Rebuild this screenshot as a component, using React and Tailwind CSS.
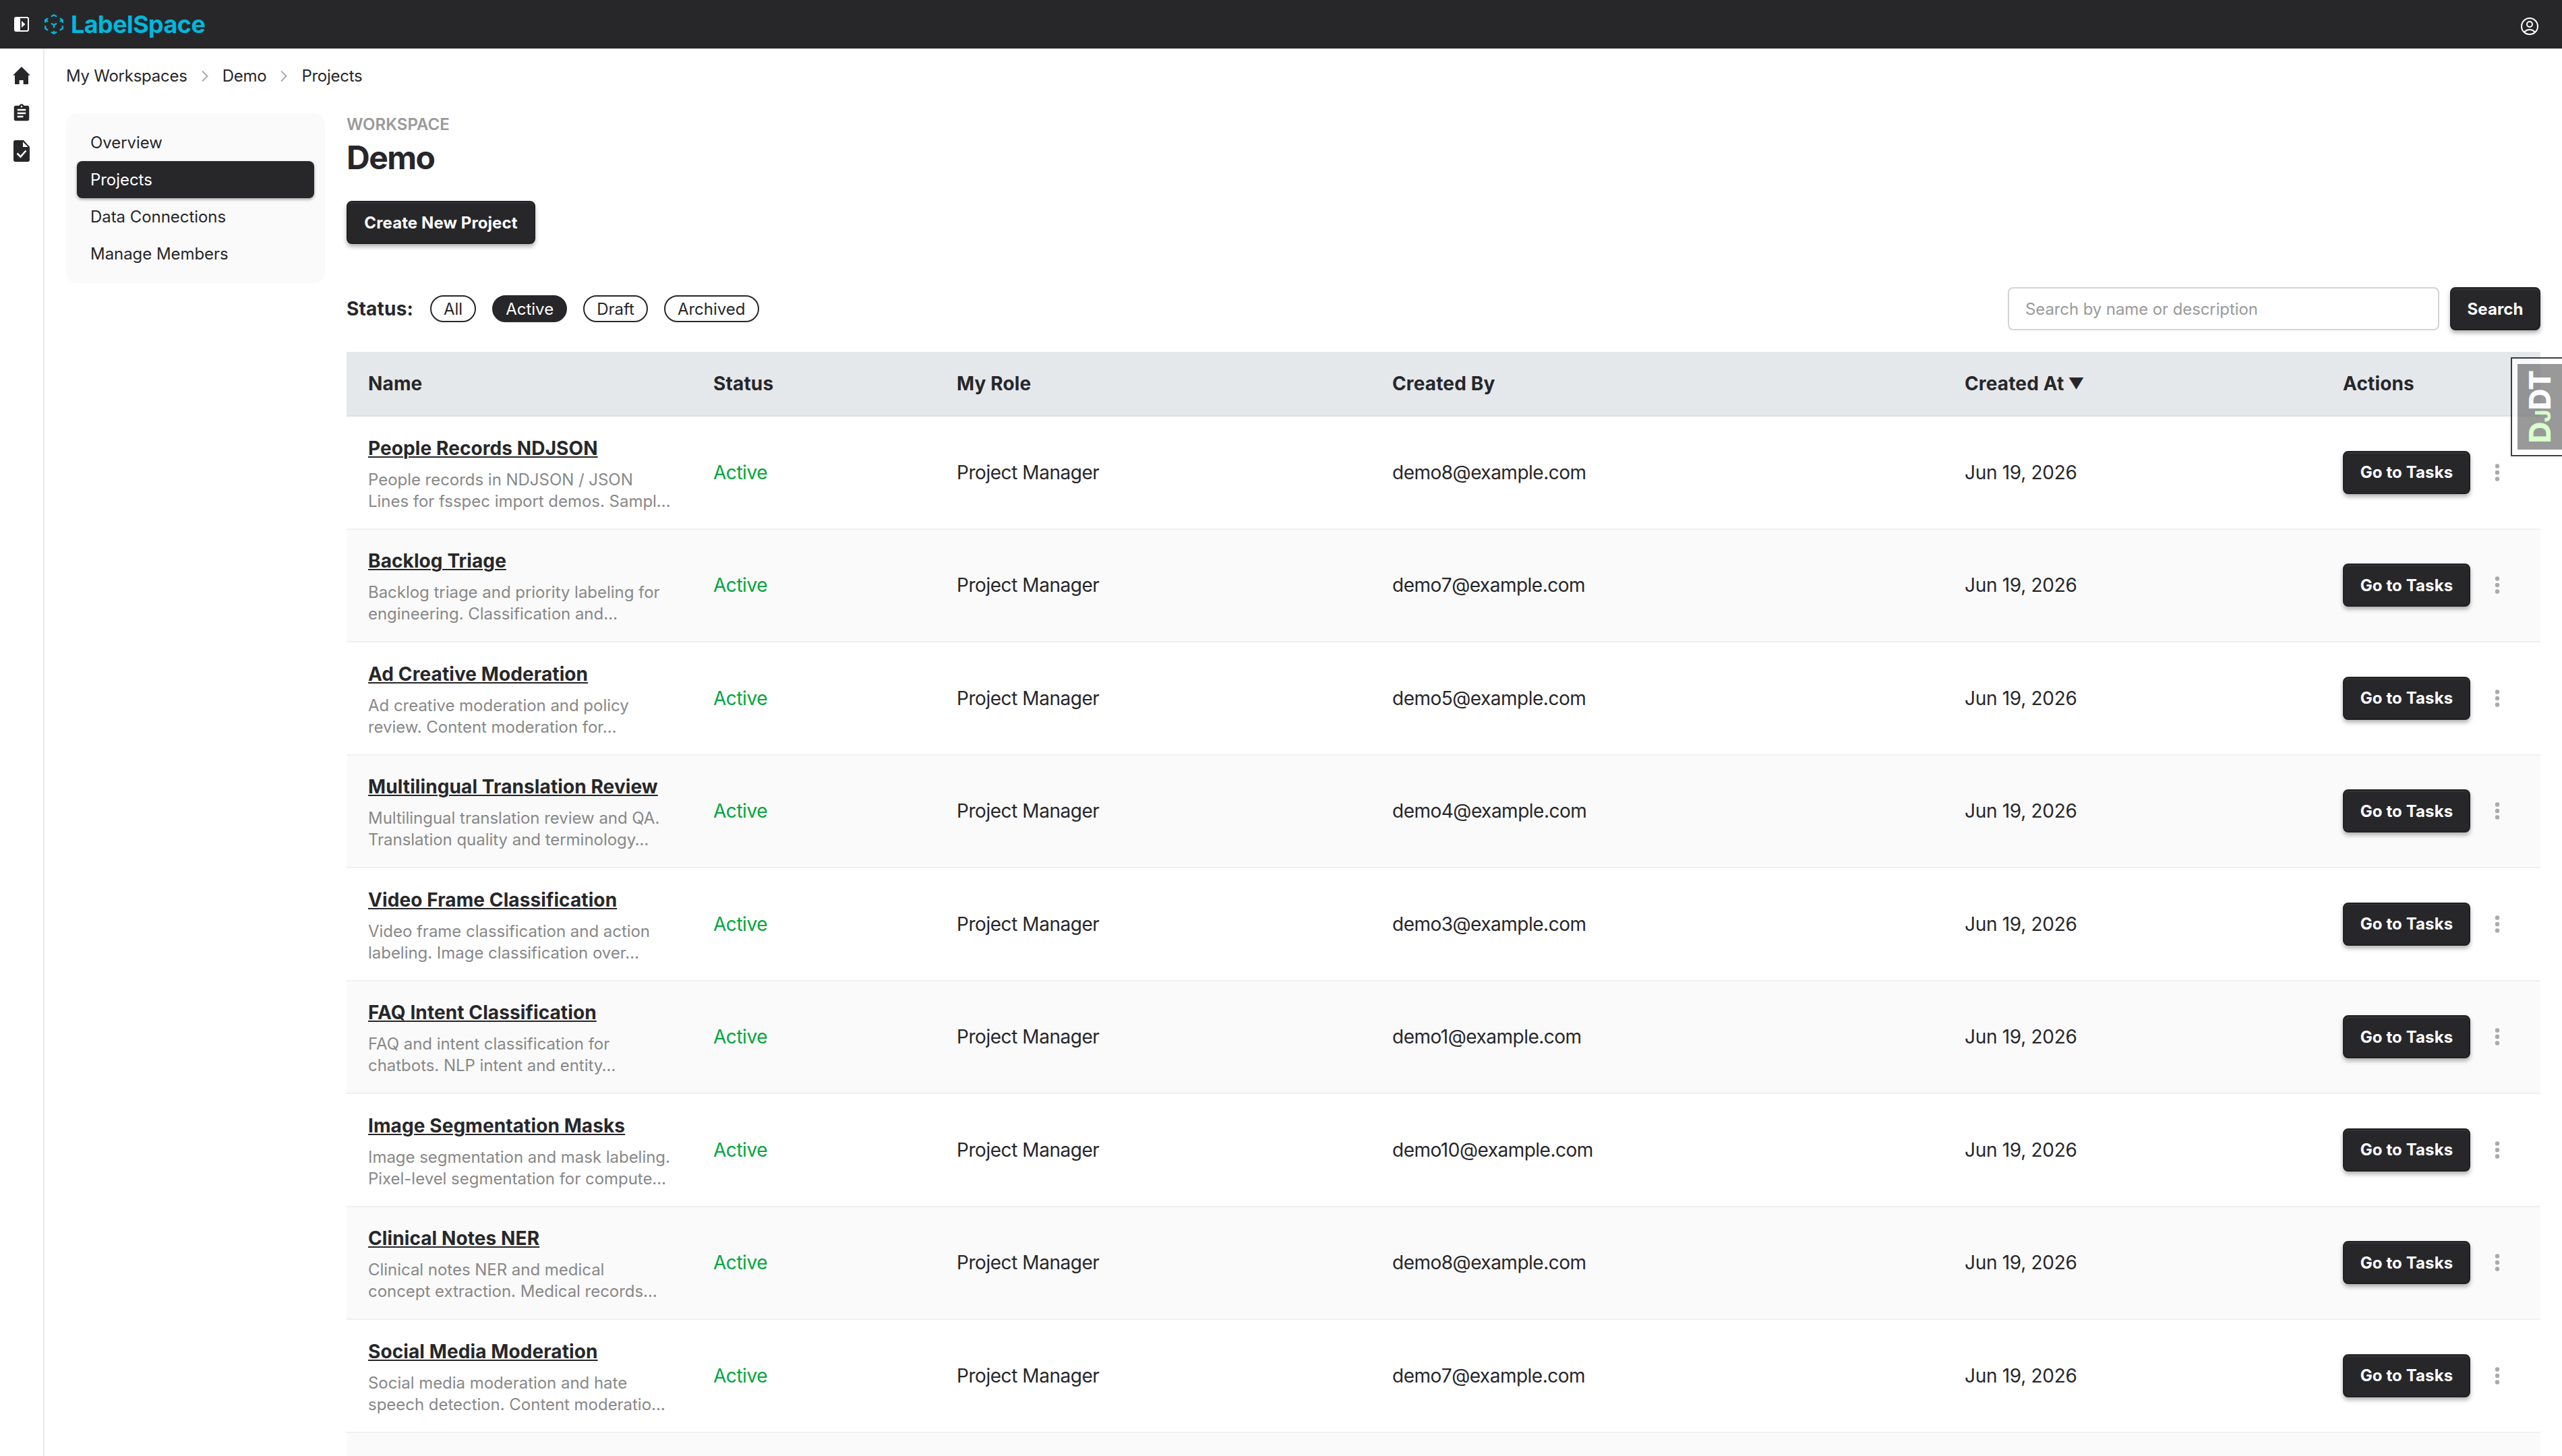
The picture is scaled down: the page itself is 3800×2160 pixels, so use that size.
import React, { useState } from 'react';

const NAV_ITEMS = ['Overview', 'Projects', 'Data Connections', 'Manage Members'];
const STATUSES = ['All', 'Active', 'Draft', 'Archived'];

const PROJECTS = [
  { name: 'People Records NDJSON', lines: ['People records in NDJSON / JSON', 'Lines for fsspec import demos. Sampl…'], createdBy: 'demo8@example.com' },
  { name: 'Backlog Triage', lines: ['Backlog triage and priority labeling for', 'engineering. Classification and…'], createdBy: 'demo7@example.com' },
  { name: 'Ad Creative Moderation', lines: ['Ad creative moderation and policy', 'review. Content moderation for…'], createdBy: 'demo5@example.com' },
  { name: 'Multilingual Translation Review', lines: ['Multilingual translation review and QA.', 'Translation quality and terminology…'], createdBy: 'demo4@example.com' },
  { name: 'Video Frame Classification', lines: ['Video frame classification and action', 'labeling. Image classification over…'], createdBy: 'demo3@example.com' },
  { name: 'FAQ Intent Classification', lines: ['FAQ and intent classification for', 'chatbots. NLP intent and entity…'], createdBy: 'demo1@example.com' },
  { name: 'Image Segmentation Masks', lines: ['Image segmentation and mask labeling.', 'Pixel-level segmentation for compute…'], createdBy: 'demo10@example.com' },
  { name: 'Clinical Notes NER', lines: ['Clinical notes NER and medical', 'concept extraction. Medical records…'], createdBy: 'demo8@example.com' },
  { name: 'Social Media Moderation', lines: ['Social media moderation and hate', 'speech detection. Content moderatio…'], createdBy: 'demo7@example.com' },
];

const GRID = 'grid grid-cols-[512px_361px_646px_849px_561px_325px] items-center';

const Button = ({ children, className = '' }) => (
  <button
    className={`h-16 pt-px rounded-[8px] bg-[#27272a] text-white text-[24px] leading-8 tracking-[0.1px] font-bold whitespace-nowrap border-2 border-[#202023] shadow-[0_4px_6px_rgba(0,0,0,0.3),inset_0_2px_0_rgba(255,255,255,0.06)] ${className}`}
  >
    {children}
  </button>
);

const Header = () => (
  <header className="h-[72px] bg-[#27272a] flex items-center justify-between pl-[18px] pr-8">
    <div className="flex items-center">
      <svg className="w-7 h-7" viewBox="0 0 28 28" fill="none">
        <rect x="4" y="4" width="20" height="20" rx="2" stroke="white" strokeWidth="2" />
        <rect x="4" y="4" width="8" height="20" fill="white" />
        <path d="M14 9l5.500 5-5.500 5z" fill="white" />
      </svg>
      <svg
        className="w-[34px] h-[34px] ml-[17px] text-[#00b8db]"
        viewBox="0 0 24 24"
        fill="none"
        stroke="currentColor"
        strokeWidth="1.700"
        strokeLinecap="round"
        strokeLinejoin="round"
      >
        <path d="m21 7.500-2.250-1.313M21 7.500v2.250m0-2.250-2.250 1.313M3 7.500l2.250-1.313M3 7.500l2.250 1.313M3 7.500v2.250m9 3 2.250-1.313M12 12.750l-2.250-1.313M12 12.750V15m0 6.750 2.250-1.313M12 21.750V19.500m0 2.250-2.250-1.313m0-16.875L12 2.250l2.250 1.313M21 14.250v2.250l-2.250 1.313m-13.500 0L3 16.500v-2.250" />
      </svg>
      <span className="ml-[8px] text-[36px] leading-10 font-bold tracking-[-0.6px] text-[#00b8db]">LabelSpace</span>
    </div>
    <svg className="w-8 h-8 mt-[6px]" viewBox="0 0 24 24" fill="none" stroke="white" strokeWidth="1.500">
      <path d="M17.982 18.725A7.488 7.488 0 0 0 12 15.750a7.488 7.488 0 0 0-5.982 2.975m11.963 0a9 9 0 1 0-11.963 0m11.963 0A8.966 8.966 0 0 1 12 21a8.966 8.966 0 0 1-5.982-2.275M15 9.750a3 3 0 1 1-6 0 3 3 0 0 1 6 0Z" />
    </svg>
  </header>
);

const Sidebar = () => (
  <aside className="w-[66px] shrink-0 border-r-2 border-[#e9e9e9] flex flex-col items-center pt-[24px] gap-[24px] text-[#27272a]">
    <svg className="w-8 h-8" viewBox="0 0 24 24" fill="currentColor">
      <path d="M12 2.200L2.400 11.900h2.100v9.200c0 .400.200.600.600.600h4.400v-4.500H14v4.500h4.900c.400 0 .600-.200.600-.600v-9.200h2.100z" />
    </svg>
    <svg className="w-[30px] h-8" viewBox="0 0 24 24" fill="currentColor">
      <path d="M19 3h-4.180C14.400 1.840 13.300 1 12 1s-2.400.840-2.820 2H5c-1.100 0-2 .900-2 2v14c0 1.100.900 2 2 2h14c1.100 0 2-.900 2-2V5c0-1.100-.900-2-2-2zm-7 0c.550 0 1 .450 1 1s-.450 1-1 1-1-.450-1-1 .450-1 1-1zm2 14H7v-2h7v2zm3-4H7v-2h10v2zm0-4H7V7h10v2z" />
    </svg>
    <svg className="w-8 h-8" viewBox="0 0 32 32">
      <path d="M7 0h12l9 10v19a3 3 0 0 1-3 3H7a3 3 0 0 1-3-3V3a3 3 0 0 1 3-3z" fill="currentColor" />
      <path d="M18 2.500v7.500h7.500z" fill="white" />
      <path d="M9.500 19.500l5 5 8-9" fill="none" stroke="white" strokeWidth="2.600" />
    </svg>
  </aside>
);

const Chevron = () => (
  <svg className="w-[10px] h-4 mx-[21px]" viewBox="0 0 10 16" fill="none" stroke="#aaa" strokeWidth="2">
    <path d="M1 0.500l7.500 7.500L1 15.500" />
  </svg>
);

const ProjectRow = ({ project, odd }) => (
  <div className={`${GRID} h-[167.500px] border-b-2 border-[#f0f0f0] tracking-[-0.45px] ${odd ? 'bg-[#fafafa]' : 'bg-white'}`}>
    <div className="pl-8 h-[112px]">
      <a className="block text-[28px] leading-10 font-bold tracking-[0.1px] underline underline-offset-[2px] decoration-2">{project.name}</a>
      <p className="mt-[11px] text-[24px] leading-8 tracking-[-0.03px] text-[#888] whitespace-nowrap">
        {project.lines[0]}
        <br />
        {project.lines[1]}
      </p>
    </div>
    <div className="pl-8 text-[#00a63e]">Active</div>
    <div className="pl-8">Project Manager</div>
    <div className="pl-8 tracking-[-0.5px]">{project.createdBy}</div>
    <div className="pl-8 tracking-[-0.3px]">Jun 19, 2026</div>
    <div className="pl-8 flex items-center">
      <Button className="w-[189px]">Go to Tasks</Button>
      <svg className="w-2 h-[26px] ml-9" viewBox="0 0 8 26" fill="#aaa">
        <circle cx="4" cy="3.500" r="3.200" />
        <circle cx="4" cy="13" r="3.200" />
        <circle cx="4" cy="22.500" r="3.200" />
      </svg>
    </div>
  </div>
);

export default function App() {
  const [status, setStatus] = useState('Active');

  return (
    <div className="w-[3800px] h-[2160px] overflow-hidden relative flex flex-col bg-white text-[#27272a] text-[28px] leading-10 font-[Inter,sans-serif]">
      <Header />
      <div className="flex flex-1 min-h-0">
        <Sidebar />
        <main className="flex-1 pl-8 pr-8 pt-[25px]">
          <nav className="flex items-center text-[24px] leading-8 tracking-[-0.25px]">
            <span>My Workspaces</span>
            <Chevron />
            <span>Demo</span>
            <Chevron />
            <span>Projects</span>
          </nav>

          <div className="flex mt-[39px]">
            <ul className="w-[384px] h-[252px] shrink-0 p-4 rounded-[16px] bg-[#fafafa] text-[24px] leading-8 tracking-[-0.05px]">
              {NAV_ITEMS.map((item) => (
                <li
                  key={item}
                  className={`h-[55px] flex items-center px-5 rounded-[8px] ${item === 'Projects' ? 'bg-[#27272a] text-white shadow-[0_2px_4px_rgba(0,0,0,0.35)]' : ''}`}
                >
                  {item}
                </li>
              ))}
            </ul>

            <section className="flex-1 ml-8">
              <p className="pt-px text-[24px] leading-8 font-semibold text-[#9a9a9a]">WORKSPACE</p>
              <h1 className="text-[48px] leading-[64px] mt-px font-bold tracking-[-1.500px]">Demo</h1>
              <Button className="mt-[32px] w-[280px]">Create New Project</Button>

              <div className="flex items-center justify-between mt-[64px]">
                <div className="flex items-center gap-6">
                  <span className="font-bold w-[100px] tracking-[0.2px]">Status:</span>
                  {STATUSES.map((s) => (
                    <button
                      key={s}
                      onClick={() => setStatus(s)}
                      className={`h-10 px-[18px] rounded-[20px] border-2 border-[#27272a] text-[24px] leading-8 pt-px ${s === status ? 'bg-[#27272a] text-white' : ''}`}
                    >
                      {s}
                    </button>
                  ))}
                </div>
                <div className="flex items-center gap-4">
                  <input
                    placeholder="Search by name or description"
                    className="w-[640px] h-16 px-6 border-2 border-[#d4d4d4] rounded-[8px] text-[24px] tracking-[-0.1px] placeholder:text-[#9a9a9a]"
                  />
                  <Button className="w-[134px]">Search</Button>
                </div>
              </div>

              <div className="mt-8">
                <div className={`${GRID} h-24 bg-[#e5e8eb] border-b-2 border-[#dcdfe2] font-bold tracking-[0.15px]`}>
                  <div className="pl-8">Name</div>
                  <div className="pl-8">Status</div>
                  <div className="pl-8">My Role</div>
                  <div className="pl-8">Created By</div>
                  <div className="pl-8 flex items-center gap-[6px]">
                    <span>Created At</span>
                    <span className="text-[23px]">▼</span>
                  </div>
                  <div className="pl-8">Actions</div>
                </div>
                {PROJECTS.map((project, i) => (
                  <ProjectRow key={project.name} project={project} odd={i % 2 === 1} />
                ))}
                <div className="h-[100px] bg-[#fafafa]" />
              </div>
            </section>
          </div>
        </main>
      </div>

      {/* debug toolbar handle */}
      <div className="absolute right-0 top-[530px] w-[76px] h-[147px] opacity-75 bg-white border-2 border-r-0 border-black p-2 pr-0">
        <div className="w-full h-full bg-[#777] flex items-center justify-center">
          <span className="-rotate-90 whitespace-nowrap font-extrabold text-[44px] leading-[38px] pt-1 text-white font-[Inter,sans-serif] tracking-[-0.5px]">
            <span className="text-[#cfb]">D<span className="text-[31px]">J</span></span>DT
          </span>
        </div>
      </div>
    </div>
  );
}
